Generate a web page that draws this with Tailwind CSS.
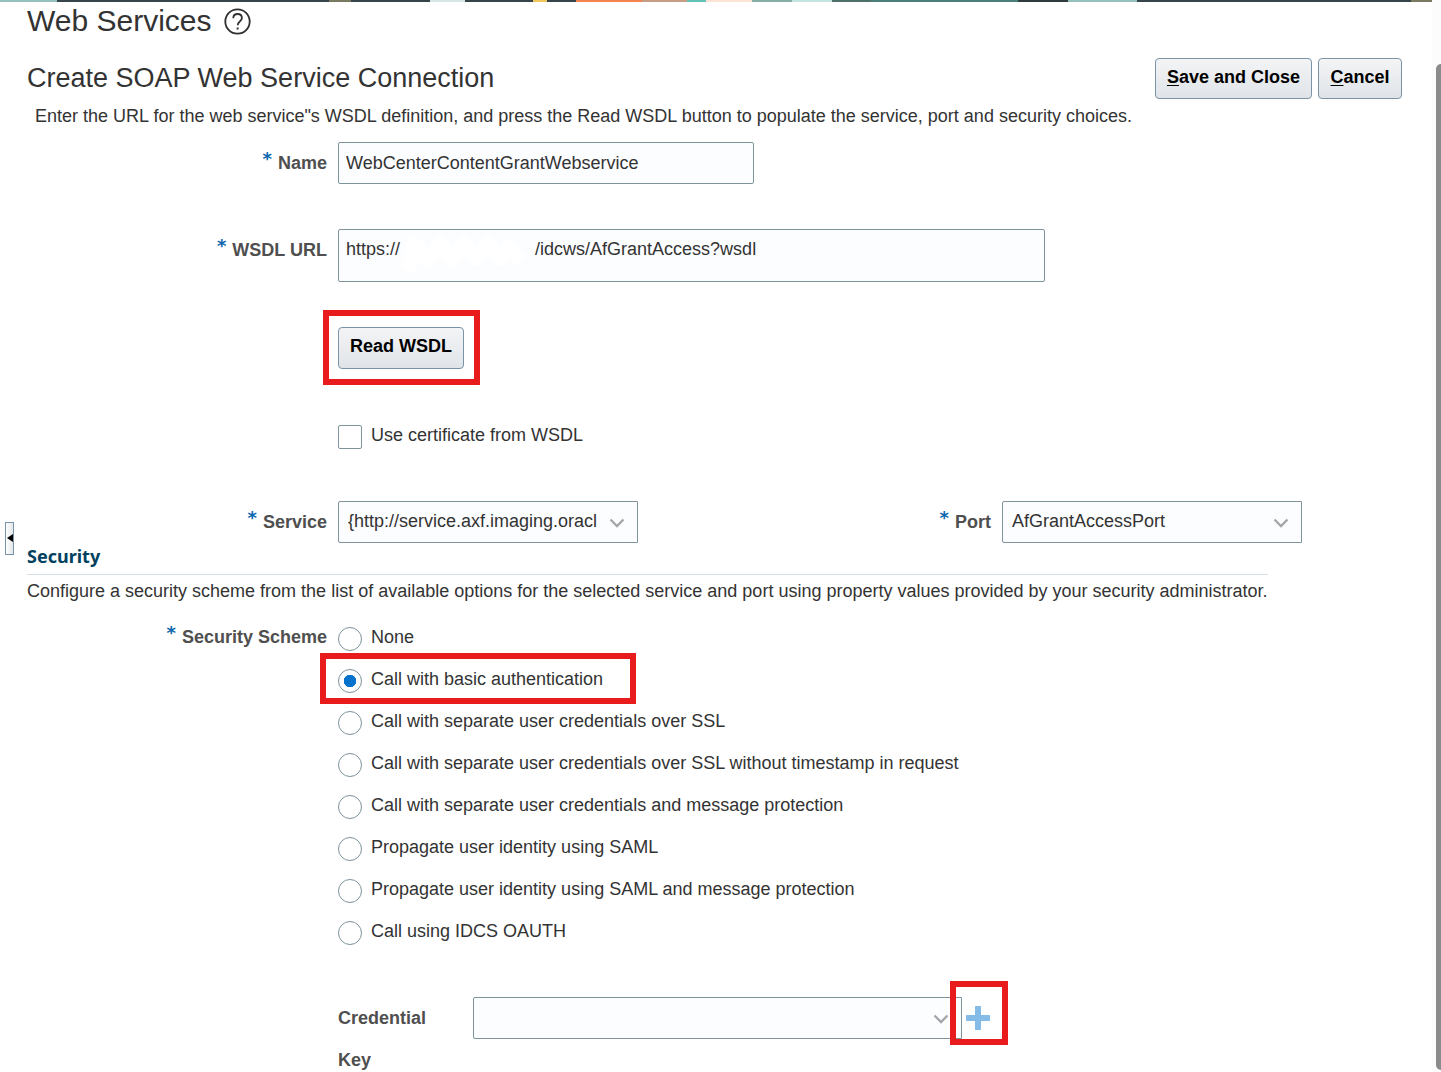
<!DOCTYPE html>
<html lang="en">
<head>
<meta charset="utf-8">
<title>Web Services</title>
<script src="https://cdn.jsdelivr.net/npm/@tailwindcss/browser@4"></script>
</head>
<body class="flex h-screen overflow-hidden bg-white font-['Liberation_Sans',Arial,sans-serif] text-lg leading-6 text-[#333333]">
<div class="flex min-w-0 flex-1 flex-col">
  <div class="h-0.5 shrink-0 bg-[linear-gradient(90deg,#95c0bb_4%,#36454a_4%_23%,#7a7a60_23%_24.5%,#36454a_24.5%_30%,#d5e6e4_30%_32.5%,#36454a_32.5%_37.2%,#f2c75c_37.2%_38.2%,#36454a_38.2%_40.2%,#f5834f_40.2%_44.8%,#c79c85_44.8%_48%,#62c2b6_48%_49.3%,#fde3d5_49.3%_52.5%,#86aea5_52.5%_55.3%,#c5e4e0_55.3%_58.1%,#4f7068_58.1%_60.8%,#4b7f7a_60.8%_71.1%,#2d3b3d_71.1%_74.6%,#95c0bb_74.6%_79.4%,#36454a_79.4%_98.5%,#7a7a60_98.5%)]"></div>
  <div class="flex min-h-0 flex-1">
    <aside class="flex w-[27px] shrink-0 items-center pt-0.5 pl-[5px]">
      <button type="button" aria-label="Collapse panel" class="flex h-[33px] w-[9px] items-center justify-end border border-[#7b93a6] bg-[linear-gradient(90deg,#ffffff,#e2e6ea)]">
        <svg class="h-2 w-[6px] shrink-0" viewBox="0 0 6 8"><path d="M6 0v8L0 4z" fill="#000"/></svg>
      </button>
    </aside>
    <main class="min-w-0 flex-1">
      <div class="flex h-[38px] items-center gap-3">
        <h1 class="text-[30px] leading-8">Web Services</h1>
        <a href="#help" aria-label="Help">
          <svg class="size-[27px]" viewBox="0 0 27 27" fill="none" stroke="#2f2f2f" stroke-width="1.8"><circle cx="13.500" cy="13.500" r="12.200"/><path d="M9.300 10.200c0-2.600 1.800-4.200 4.300-4.200s4.300 1.500 4.300 3.900c0 3.400-4.200 3.700-4.200 7.400"/><path d="M12.600 20.500h2" stroke-width="2"/></svg>
        </a>
      </div>
      <div class="mt-[18px] flex items-start justify-between pr-[30px]">
        <h2 class="mt-1 text-[27px] leading-8">Create SOAP Web Service Connection</h2>
        <div class="flex gap-1.5 font-bold text-black">
          <button type="button" class="h-[41px] w-[157px] rounded border border-[#7b93a6] bg-[linear-gradient(#f3f4f6,#e0e4e8)] pb-1 whitespace-nowrap"><u class="underline-offset-2">S</u>ave and Close</button>
          <button type="button" class="h-[41px] w-[84px] rounded border border-[#7b93a6] bg-[linear-gradient(#f3f4f6,#e0e4e8)] pb-1"><u class="underline-offset-2">C</u>ancel</button>
        </div>
      </div>
      <p class="mt-[5px] pl-2">Enter the URL for the web service"s WSDL definition, and press the Read WSDL button to populate the service, port and security choices.</p>

      <form>
        <div class="mt-[14px] grid grid-cols-[300px_1fr] gap-x-[11px]">
          <label for="name" class="mt-[9px] flex justify-end gap-1.5 font-bold text-[#4f4f4f]"><span class="-mt-1 font-['DejaVu_Sans',sans-serif] text-[#0c66ae]">*</span>Name</label>
          <input id="name" type="text" value="WebCenterContentGrantWebservice" class="h-[42px] w-[416px] rounded-xs border border-[#7e939b] bg-[#fcfdff] px-[7px]">
        </div>
        <div class="mt-[45px] grid grid-cols-[300px_1fr] gap-x-[11px]">
          <label for="url" class="mt-[9px] flex justify-end gap-1.5 font-bold text-[#4f4f4f]"><span class="-mt-1 font-['DejaVu_Sans',sans-serif] text-[#0c66ae]">*</span>WSDL URL</label>
          <div class="relative w-[707px]">
            <textarea id="url" class="block h-[53px] w-full resize-none overflow-hidden rounded-xs border border-[#7e939b] bg-[#fcfdff] px-[7px] py-[7px]">https://&nbsp;&nbsp;&nbsp;&nbsp;&nbsp;&nbsp;&nbsp;&nbsp;&nbsp;&nbsp;&nbsp;&nbsp;&nbsp;&nbsp;&nbsp;&nbsp;&nbsp;&nbsp;&nbsp;&nbsp;&nbsp;&nbsp;&nbsp;&nbsp;&nbsp;&nbsp;&nbsp;/idcws/AfGrantAccess?wsdl</textarea>
            <svg class="absolute top-1 left-16 h-11 w-32" viewBox="0 0 128 44" fill="none" stroke="#fff" stroke-width="14" stroke-linejoin="round"><path d="M6 38L12 10l14 18 12-18 12 18 12-18 12 16 12-16 12 16 10-12 10 14"/></svg>
          </div>
        </div>
        <div class="mt-[28px] ml-[296px] w-fit border-6 border-[#e81c1c] pt-[11px] pr-[10px] pb-[10px] pl-[9px]">
          <button type="button" class="block h-[42px] w-[126px] rounded border border-[#7b93a6] bg-[linear-gradient(#f3f4f6,#e0e4e8)] pb-1 font-bold text-black">Read WSDL</button>
        </div>
        <div class="mt-[39px] ml-[311px] flex gap-[9px]">
          <input id="cert" type="checkbox" class="mt-px size-6 appearance-none rounded-xs border border-[#7e939b] bg-white">
          <label for="cert" class="-mt-px">Use certificate from WSDL</label>
        </div>
        <div class="mt-[52px] grid grid-cols-[300px_300px_342px_300px] gap-x-[11px]">
          <label for="service" class="mt-[9px] flex justify-end gap-1.5 font-bold text-[#4f4f4f]"><span class="-mt-1 font-['DejaVu_Sans',sans-serif] text-[#0c66ae]">*</span>Service</label>
          <div class="grid">
            <select id="service" class="col-start-1 row-start-1 h-[42px] w-full appearance-none rounded-l-xs border border-[#7e939b] bg-[#fcfdff] pr-10 pb-0.5 pl-[9px]"><option>{http://service.axf.imaging.oracl</option></select>
            <svg class="pointer-events-none col-start-1 row-start-1 mt-0.5 mr-[13px] h-4 w-4 self-center justify-self-end" viewBox="0 0 16 16" fill="none" stroke="#a2a6a9" stroke-width="2.300"><path d="M1.500 4.500L8 11l6.500-6.500"/></svg>
          </div>
          <label for="port" class="mt-[9px] flex justify-end gap-1.5 font-bold text-[#4f4f4f]"><span class="-mt-1 font-['DejaVu_Sans',sans-serif] text-[#0c66ae]">*</span>Port</label>
          <div class="grid">
            <select id="port" class="col-start-1 row-start-1 h-[42px] w-full appearance-none rounded-l-xs border border-[#7e939b] bg-[#fcfdff] pr-10 pb-0.5 pl-[9px]"><option>AfGrantAccessPort</option></select>
            <svg class="pointer-events-none col-start-1 row-start-1 mt-0.5 mr-[13px] h-4 w-4 self-center justify-self-end" viewBox="0 0 16 16" fill="none" stroke="#a2a6a9" stroke-width="2.300"><path d="M1.500 4.500L8 11l6.500-6.500"/></svg>
          </div>
        </div>

        <section class="w-fit">
          <h3 class="border-b border-[#d6dfe6] pt-px pb-1.5 font-['Noto_Sans',sans-serif] font-bold text-[#00415f]">Security</h3>
          <p class="mt-1">Configure a security scheme from the list of available options for the selected service and port using property values provided by your security administrator.</p>
        </section>

        <div role="radiogroup" aria-labelledby="scheme" class="mt-[13px] grid grid-cols-[300px_1fr] gap-x-[11px]">
          <div id="scheme" class="mt-[9px] flex justify-end gap-1.5 font-bold text-[#4f4f4f]"><span class="-mt-1 font-['DejaVu_Sans',sans-serif] text-[#0c66ae]">*</span>Security Scheme</div>
          <div>
            <div class="flex h-[42px] items-center gap-[9px]"><input id="r1" name="scheme" type="radio" class="mt-1 size-6 appearance-none rounded-full border border-[#7e939b] bg-white"><label for="r1">None</label></div>
            <div class="relative flex h-[42px] items-center gap-[9px]">
              <input id="r2" name="scheme" type="radio" checked class="mt-1 size-6 appearance-none rounded-full border border-[#7e939b] bg-white checked:bg-[radial-gradient(circle,#0572ce_6px,#ffffff_6.500px)]"><label for="r2">Call with basic authentication</label>
              <div class="pointer-events-none absolute -top-[5px] -left-[18px] h-[51px] w-[316px] border-6 border-[#e81c1c]"></div>
            </div>
            <div class="flex h-[42px] items-center gap-[9px]"><input id="r3" name="scheme" type="radio" class="mt-1 size-6 appearance-none rounded-full border border-[#7e939b] bg-white"><label for="r3">Call with separate user credentials over SSL</label></div>
            <div class="flex h-[42px] items-center gap-[9px]"><input id="r4" name="scheme" type="radio" class="mt-1 size-6 appearance-none rounded-full border border-[#7e939b] bg-white"><label for="r4">Call with separate user credentials over SSL without timestamp in request</label></div>
            <div class="flex h-[42px] items-center gap-[9px]"><input id="r5" name="scheme" type="radio" class="mt-1 size-6 appearance-none rounded-full border border-[#7e939b] bg-white"><label for="r5">Call with separate user credentials and message protection</label></div>
            <div class="flex h-[42px] items-center gap-[9px]"><input id="r6" name="scheme" type="radio" class="mt-1 size-6 appearance-none rounded-full border border-[#7e939b] bg-white"><label for="r6">Propagate user identity using SAML</label></div>
            <div class="flex h-[42px] items-center gap-[9px]"><input id="r7" name="scheme" type="radio" class="mt-1 size-6 appearance-none rounded-full border border-[#7e939b] bg-white"><label for="r7">Propagate user identity using SAML and message protection</label></div>
            <div class="flex h-[42px] items-center gap-[9px]"><input id="r8" name="scheme" type="radio" class="mt-1 size-6 appearance-none rounded-full border border-[#7e939b] bg-white"><label for="r8">Call using IDCS OAUTH</label></div>
          </div>
        </div>

        <div class="mt-[45px] ml-[311px] flex items-start">
          <label for="cred" class="w-[135px] pr-8 leading-[42px] font-bold text-[#4f4f4f]">Credential Key</label>
          <div class="grid w-[489px]">
            <select id="cred" class="col-start-1 row-start-1 h-[42px] w-full appearance-none rounded-l-xs border border-[#7e939b] bg-[#fcfdff] pr-10 pl-[9px]"><option></option></select>
            <svg class="pointer-events-none col-start-1 row-start-1 mt-0.5 mr-[13px] h-4 w-4 self-center justify-self-end" viewBox="0 0 16 16" fill="none" stroke="#a2a6a9" stroke-width="2.300"><path d="M1.500 4.500L8 11l6.500-6.500"/></svg>
          </div>
          <button type="button" aria-label="Add key" class="relative flex h-[42px] items-center pl-1">
            <svg class="size-6" viewBox="0 0 24 24" fill="#85bbe7"><rect x="9" width="6" height="24" rx=".5"/><rect y="9" width="24" height="6" rx=".5"/></svg>
            <span class="pointer-events-none absolute -top-4 -left-3 h-16 w-[58px] border-6 border-[#e81c1c]"></span>
          </button>
        </div>
      </form>
    </main>
  </div>
</div>
<div class="w-[9px] shrink-0 overflow-hidden bg-[#fcfcfc] pt-16 pb-0.5 pl-1">
  <div class="h-full w-2.5 rounded-full bg-[#8b8b8b]"></div>
</div>
</body>
</html>
